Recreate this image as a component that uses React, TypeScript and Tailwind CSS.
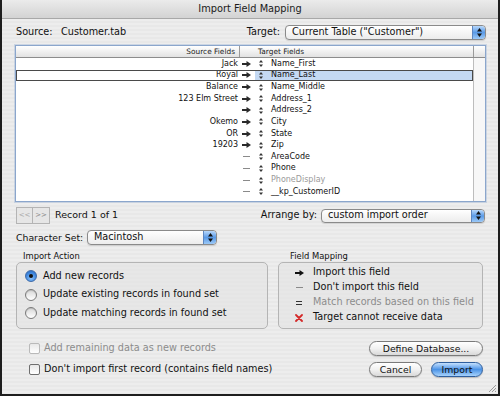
import React from "react";

const rows: { src: string; map: "arrow" | "dash"; tgt: string; sel?: boolean; dim?: boolean }[] = [
  { src: "Jack", map: "arrow", tgt: "Name_First" },
  { src: "Royal", map: "arrow", tgt: "Name_Last", sel: true },
  { src: "Balance", map: "arrow", tgt: "Name_Middle" },
  { src: "123 Elm Street", map: "arrow", tgt: "Address_1" },
  { src: "", map: "arrow", tgt: "Address_2" },
  { src: "Okemo", map: "arrow", tgt: "City" },
  { src: "OR", map: "arrow", tgt: "State" },
  { src: "19203", map: "arrow", tgt: "Zip" },
  { src: "", map: "dash", tgt: "AreaCode" },
  { src: "", map: "dash", tgt: "Phone" },
  { src: "", map: "dash", tgt: "PhoneDisplay", dim: true },
  { src: "", map: "dash", tgt: "__kp_CustomerID" },
];

function Arrow({ w = 9, color = "#2a2a2a" }: { w?: number; color?: string }) {
  return (
    <svg width={w} height={6} viewBox="0 0 9 6">
      <rect x={0} y={2} width={5.5} height={2} fill={color} />
      <polygon points="4.5,0 9,3 4.5,6" fill={color} />
    </svg>
  );
}

function Handle() {
  return (
    <svg width={4} height={7} viewBox="0 0 4 7">
      <polygon points="2,0 4,2.6 0,2.6" fill="#333" />
      <polygon points="0,4.4 4,4.4 2,7" fill="#333" />
    </svg>
  );
}

function UpDown() {
  return (
    <svg width={5} height={9} viewBox="0 0 5 9">
      <polygon points="2.5,0 5,3.4 0,3.4" fill="#111" />
      <polygon points="0,5.6 5,5.6 2.5,9" fill="#111" />
    </svg>
  );
}

function Popup({ label, w, h }: { label: string; w: string; h: string }) {
  return (
    <div
      className={`${w} ${h} flex items-stretch overflow-hidden rounded-[4px] border border-[#8a8a8a] bg-gradient-to-b from-white to-[#ececec] shadow-[0_1px_1px_rgba(0,0,0,0.12)]`}
    >
      <div className="flex flex-1 items-center pl-[6px] text-[9.7px] text-[#111]">{label}</div>
      <div className="flex w-[13px] items-center justify-center rounded-r-[3px] border-l border-[#5d86c0] bg-gradient-to-b from-[#b8d8fb] via-[#5a9ae6] to-[#9cc9f7]">
        <UpDown />
      </div>
    </div>
  );
}

function Radio({ on }: { on?: boolean }) {
  return on ? (
    <div className="flex h-[12px] w-[12px] items-center justify-center rounded-full border border-[#3e6aa8] bg-[radial-gradient(circle_at_50%_70%,#8cc3fb_0%,#3d86de_60%,#2a63b4_100%)]">
      <div className="h-[4px] w-[4px] rounded-full bg-[#111]" />
    </div>
  ) : (
    <div className="h-[12px] w-[12px] rounded-full border border-[#7a7a7a] bg-gradient-to-b from-[#d8d8d8] to-white shadow-[inset_0_1px_1px_rgba(0,0,0,0.15)]" />
  );
}

function Checkbox({ disabled }: { disabled?: boolean }) {
  return (
    <div
      className={`h-[11px] w-[11px] rounded-[2px] border bg-gradient-to-b from-[#e8e8e8] to-white ${
        disabled ? "border-[#b9b9b9]" : "border-[#6e6e6e]"
      }`}
    />
  );
}

export default function App() {
  return (
    <div className="relative flex h-[396px] w-[500px] flex-col overflow-hidden border-x-2 border-b-2 border-[#1e1e1e] bg-[#ebebeb] font-['DejaVu_Sans',sans-serif] text-[#111]">
      {/* Title bar */}
      <div className="flex h-[19px] shrink-0 items-center justify-center border-b border-[#a8a8a8] bg-gradient-to-b from-[#ebebeb] to-[#d3d3d3] text-[9.8px] text-[#1a1a1a]">
        Import Field Mapping
      </div>

      <div className="flex flex-1 flex-col bg-[repeating-linear-gradient(180deg,#ededed_0px,#ededed_2px,#e8e8e8_2px,#e8e8e8_4px)] pl-[13px] pr-[12px] pt-[6px]">
        {/* Source / Target row */}
        <div className="flex h-[15px] items-center text-[9.7px]">
          <span className="ml-[1px] w-[45px]">Source:</span>
          <span>Customer.tab</span>
          <span className="ml-auto mr-[5px]">Target:</span>
          <Popup label={'Current Table ("Customer")'} w="w-[201px]" h="h-[15px]" />
        </div>

        {/* Table */}
        <div className="mt-[5px] flex h-[157px] w-[471px] flex-col overflow-hidden border border-[#8ba6cc] bg-white shadow-[0_0_0_1px_rgba(140,170,210,0.35)]">
          <div className="flex h-[12px] shrink-0 border-b border-[#8c8c8c] bg-gradient-to-b from-white to-[#e2e2e2] text-[7.4px] leading-[11px] text-[#222]">
            <div className="w-[224px] border-r border-[#9a9a9a] pr-[4px] text-right">Source Fields</div>
            <div className="flex-1 border-r border-[#9a9a9a] pl-[18px]">Target Fields</div>
            <div className="w-[11px]" />
          </div>
          <div className="flex flex-1">
            <div className="flex flex-1 flex-col">
              {rows.map((r, i) => (
                <div
                  key={i}
                  className={`flex h-[11.64px] items-stretch text-[8px] ${
                    r.sel ? "outline outline-1 -outline-offset-1 outline-[#4a4a4a]" : ""
                  }`}
                >
                  <div className="flex w-[224px] items-center justify-end pr-[2px]">{r.src}</div>
                  <div className="flex w-[15px] items-center pl-[2px]">
                    {r.map === "arrow" ? (
                      <Arrow />
                    ) : (
                      <div className="ml-[1px] h-[1px] w-[7px] bg-[#8a8a8a]" />
                    )}
                  </div>
                  <div
                    className={`flex flex-1 items-center pl-[4px] ${
                      r.sel ? "my-[1px] mr-[1px] bg-[#c4d9f3]" : ""
                    }`}
                  >
                    <Handle />
                    <span className={`ml-[8px] ${r.dim ? "text-[#9a9a9a]" : "text-[#111]"}`}>{r.tgt}</span>
                  </div>
                </div>
              ))}
            </div>
            <div className="w-[12px] border-l border-[#bdbdbd] bg-[#f7f7f7]" />
          </div>
        </div>

        {/* Nav row */}
        <div className="mt-[5px] flex h-[17px] items-center">
          <div className="ml-[1px] flex h-[17px]">
            <div className="flex w-[17px] items-center justify-center border border-[#b4b4b4] bg-[#e6e6e6] text-[7px] text-[#a8a8a8]">
              &lt;&lt;
            </div>
            <div className="flex w-[17px] items-center justify-center border border-l-0 border-[#b4b4b4] bg-[#e6e6e6] text-[7px] text-[#8a8a8a]">
              &gt;&gt;
            </div>
          </div>
          <span className="ml-[5px] text-[9.5px]">Record 1 of 1</span>
          <span className="ml-auto mr-[4px] text-[9.7px]">Arrange by:</span>
          <div className="mr-[1px]">
            <Popup label="custom import order" w="w-[164px]" h="h-[14px]" />
          </div>
        </div>

        {/* Character set */}
        <div className="mt-[6px] flex h-[15px] items-center">
          <span className="ml-[1px] w-[71px] text-[9.3px]">Character Set:</span>
          <Popup label="Macintosh" w="w-[130px]" h="h-[15px]" />
        </div>

        {/* Group boxes */}
        <div className="mt-[6px] flex">
          <div className="ml-[1px] flex w-[252px] flex-col">
            <div className="h-[10px] pl-[7px] text-[8.4px] leading-[10px]">Import Action</div>
            <div className="mt-[1px] flex h-[67px] flex-col rounded-[5px] border border-[#b4b4b4] bg-[#e3e3e3]/60 pl-[8px] pt-[4px] text-[9.7px]">
              {[
                ["Add new records", true],
                ["Update existing records in found set", false],
                ["Update matching records in found set", false],
              ].map(([t, on], i) => (
                <div key={i} className="flex h-[18.5px] items-center">
                  <Radio on={on as boolean} />
                  <span className="ml-[6px]">{t as string}</span>
                </div>
              ))}
            </div>
          </div>
          <div className="ml-[10px] flex w-[205px] flex-col">
            <div className="h-[10px] pl-[12px] text-[8.4px] leading-[10px]">Field Mapping</div>
            <div className="mt-[1px] flex h-[67px] flex-col rounded-[5px] border border-[#b4b4b4] bg-[#e3e3e3]/60 pl-[15px] pt-[2px] text-[9.7px]">
              <div className="flex h-[15px] items-center">
                <div className="flex w-[10px] justify-center">
                  <Arrow color="#111" />
                </div>
                <span className="ml-[9px]">Import this field</span>
              </div>
              <div className="flex h-[15px] items-center">
                <div className="flex w-[10px] justify-center">
                  <div className="h-[1px] w-[7px] bg-[#8a8a8a]" />
                </div>
                <span className="ml-[9px]">Don't import this field</span>
              </div>
              <div className="flex h-[15px] items-center">
                <div className="flex w-[10px] flex-col items-center gap-[2px]">
                  <div className="h-[1px] w-[6px] bg-[#333]" />
                  <div className="h-[1px] w-[6px] bg-[#333]" />
                </div>
                <span className="ml-[9px] text-[#8c8c8c]">Match records based on this field</span>
              </div>
              <div className="flex h-[15px] items-center">
                <div className="flex w-[10px] justify-center">
                  <svg width={8} height={8} viewBox="0 0 8 8">
                    <path d="M1 1 L7 7 M7 1 L1 7" stroke="#d42a2a" strokeWidth={1.8} strokeLinecap="round" />
                  </svg>
                </div>
                <span className="ml-[9px]">Target cannot receive data</span>
              </div>
            </div>
          </div>
        </div>

        {/* Bottom rows */}
        <div className="mt-[12px] flex h-[15px] items-center">
          <div className="ml-[14px]">
            <Checkbox disabled />
          </div>
          <span className="ml-[4px] text-[9.7px] text-[#8c8c8c]">Add remaining data as new records</span>
          <div className="ml-auto mr-[3px] flex h-[15px] w-[114px] items-center justify-center rounded-full border border-[#7a7a7a] bg-gradient-to-b from-white via-[#f1f1f1] to-[#d9d9d9] text-[9.3px] shadow-[0_1px_1px_rgba(0,0,0,0.15)]">
            Define Database...
          </div>
        </div>
        <div className="mt-[6px] flex h-[15px] items-center">
          <div className="ml-[14px]">
            <Checkbox />
          </div>
          <span className="ml-[4px] text-[9.7px]">Don't import first record (contains field names)</span>
          <div className="ml-auto flex h-[15px] w-[53px] items-center justify-center rounded-full border border-[#7a7a7a] bg-gradient-to-b from-white via-[#f1f1f1] to-[#d9d9d9] text-[9.3px] shadow-[0_1px_1px_rgba(0,0,0,0.15)]">
            Cancel
          </div>
          <div className="ml-[9px] mr-[3px] flex h-[15px] w-[52px] items-center justify-center rounded-full border border-[#2f5f9e] bg-gradient-to-b from-[#c4e0fd] via-[#4b93e6] to-[#a6d2fb] text-[9.3px] shadow-[0_1px_1px_rgba(0,0,0,0.2)]">
            Import
          </div>
        </div>
      </div>

      {/* resize grip */}
      <svg className="absolute bottom-[1px] right-[1px]" width={10} height={10} viewBox="0 0 10 10">
        <path d="M9 2 L2 9 M9 5 L5 9 M9 8 L8 9" stroke="#9a9a9a" strokeWidth={1} />
      </svg>
    </div>
  );
}
